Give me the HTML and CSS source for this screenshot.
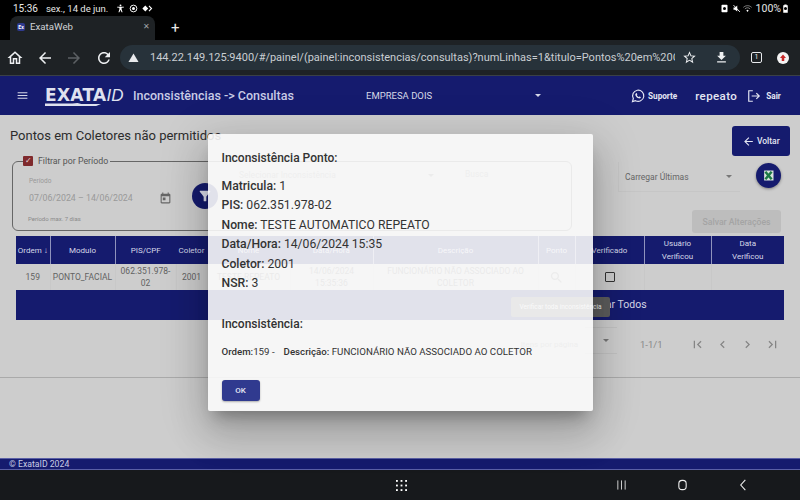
FILE: index.html
```html
<!DOCTYPE html>
<html lang="pt-BR">
<head>
  <meta charset="UTF-8">
  <meta name="viewport" content="width=device-width, initial-scale=1.0">
  <title>ExataWeb</title>
  <link rel="stylesheet" href="styles.css">
</head>
<body>
  <div class="status-bar">
    <div class="status-left">
      <span class="clock">15:36</span>
      <span>sex., 14 de jun.</span>
      <svg class="status-icon" viewBox="0 0 24 24"><path fill="#fff" d="M12 1a2.5 2.5 0 1 1 0 5 2.5 2.5 0 0 1 0-5zM3 7h18v2.4l-6 .8V14l2.5 8h-2.6L12 15.5 9.1 22H6.500L9 14v-3.800l-6-.8z"/></svg>
      <svg class="status-icon" viewBox="0 0 24 24"><circle cx="12" cy="12" r="9" fill="none" stroke="#fff" stroke-width="2.500"/><circle cx="12" cy="12" r="4" fill="#fff"/></svg>
      <svg class="status-icon wide" viewBox="0 0 30 24"><path fill="#fff" d="M9 4l8 8-8 8-8-8z"/><path fill="none" stroke="#fff" stroke-width="3" d="M19 5l7 7-7 7"/></svg>
    </div>
    <div class="status-right">
      <svg class="status-icon" viewBox="0 0 24 24"><path fill="#fff" d="M6 2h12a2 2 0 0 1 2 2v16a2 2 0 0 1-2 2H6a2 2 0 0 1-2-2V4a2 2 0 0 1 2-2zm6 6a4 4 0 1 0 0 8 4 4 0 0 0 0-8z"/></svg>
      <svg class="status-icon" viewBox="0 0 24 24"><path fill="#fff" d="M4 9h4l6-5v16l-6-5H4z"/><path stroke="#fff" stroke-width="2.500" d="M4 3l17 18"/></svg>
      <svg class="status-icon" viewBox="0 0 24 24"><path fill="none" stroke="#aaa" stroke-width="2" d="M1 9c6-6 16-6 22 0M5 13c4-4 10-4 14 0"/><path fill="#fff" d="M9 17c2-2 4-2 6 0l-3 4z"/></svg>
      <span class="battery-text">100%</span>
      <svg class="status-icon" viewBox="0 0 24 24"><path fill="#fff" d="M9 1h6v2h3v20H6V3h3zm3 7a4 4 0 1 0 0 8 4 4 0 0 0 0-8z"/></svg>
    </div>
  </div>

  <div class="tab-strip">
    <div class="tab">
      <span class="favicon">Ex</span>
      <span class="tab-title">ExataWeb</span>
      <span class="tab-close">✕</span>
    </div>
    <span class="tab-new">+</span>
  </div>

  <div class="toolbar">
    <svg class="tool-icon" viewBox="0 0 24 24"><path d="M12 5.690l5 4.500V18h-2v-6H9v6H7v-7.810l5-4.500M12 3L2 12h3v8h6v-6h2v6h6v-8h3L12 3z"/></svg>
    <svg class="tool-icon" viewBox="0 0 24 24"><path d="M20 11H7.830l5.590-5.590L12 4l-8 8 8 8 1.410-1.410L7.830 13H20v-2z"/></svg>
    <svg class="tool-icon off" viewBox="0 0 24 24"><path d="M12 4l-1.410 1.410L16.170 11H4v2h12.170l-5.580 5.590L12 20l8-8z"/></svg>
    <svg class="tool-icon" viewBox="0 0 24 24"><path d="M17.650 6.350C16.200 4.900 14.210 4 12 4c-4.420 0-7.990 3.580-7.990 8s3.570 8 7.990 8c3.730 0 6.840-2.550 7.730-6h-2.080c-.82 2.330-3.040 4-5.650 4-3.310 0-6-2.690-6-6s2.690-6 6-6c1.660 0 3.140.69 4.220 1.780L13 11h7V4l-2.350 2.350z"/></svg>
    <div class="omnibox">
      <svg class="warn-icon" viewBox="0 0 24 24"><path d="M12 3l11 19H1z"/></svg>
      <span class="url">144.22.149.125:9400/#/painel/(painel:inconsistencias/consultas)?numLinhas=1&amp;titulo=Pontos%20em%20Co</span>
      <svg class="omni-icon" viewBox="0 0 24 24"><path d="M22 9.240l-7.190-.62L12 2 9.190 8.630 2 9.240l5.460 4.730L5.820 21 12 17.270 18.180 21l-1.640-7.030L22 9.240zM12 15.400l-3.760 2.270 1-4.280-3.320-2.880 4.380-.38L12 6.100l1.710 4.040 4.380.38-3.320 2.880 1 4.280L12 15.400z"/></svg>
      <svg class="omni-icon" viewBox="0 0 24 24"><path d="M19 9h-4V3H9v6H5l7 7 7-7zM5 18v2h14v-2H5z"/></svg>
    </div>
    <span class="tab-count">1</span>
    <span class="update-dot"><svg viewBox="0 0 24 24"><path d="M12 5l6 7h-3.500v6h-5v-6H6z"/></svg></span>
  </div>

  <div class="app">
    <header class="app-header">
      <svg class="menu-icon" viewBox="0 0 24 24"><path d="M3 18h18v-2H3v2zm0-5h18v-2H3v2zm0-7v2h18V6H3z"/></svg>
      <div class="logo">
        <span class="logo-main">EXATA</span><span class="logo-id">ID</span>
        <svg class="logo-swoosh" viewBox="0 0 62 6" preserveAspectRatio="none"><path d="M0 1h28l5-1 4 2 20 0-5 4H0z"/></svg>
      </div>
      <span class="page-name">Inconsistências -&gt; Consultas</span>
      <div class="company"><span>EMPRESA DOIS</span><i class="caret light"></i></div>
      <svg class="whats-icon" viewBox="0 0 24 24"><path fill="none" stroke="#e4e6f3" stroke-width="2" d="M2.500 21.500l1.500-5.200a9.600 9.600 0 1 1 3.700 3.700z"/><path fill="#e4e6f3" d="M8.800 7.400c.5-.5 1.100-.4 1.300.1l.7 1.700c.1.300 0 .6-.5 1.200-.2.200-.2.400 0 .7.700 1.100 1.500 1.900 2.700 2.500.3.100.5.100.7-.1.600-.7.800-.8 1.100-.7l1.700.8c.4.200.5.700.2 1.300-.6 1.100-2 1.500-3.200 1.100-3.100-1-5-3-6-5.500-.4-1.200 0-2.300 1.300-3.100z"/></svg>
      <span class="support">Suporte</span>
      <span class="user">repeato</span>
      <svg class="exit-icon" viewBox="0 0 24 24"><path fill="none" stroke="#e4e6f3" stroke-width="2" d="M10 3H3v18h7M8 12h13M16 7l5 5-5 5"/></svg>
      <span class="support">Sair</span>
    </header>

    <main class="content">
      <div class="title-row">
        <h1>Pontos em Coletores não permitidos</h1>
        <button class="back-btn" type="button">
          <svg viewBox="0 0 24 24"><path d="M20 11H7.830l5.590-5.590L12 4l-8 8 8 8 1.410-1.410L7.830 13H20v-2z"/></svg>
          Voltar
        </button>
      </div>

      <div class="filter-row">
        <fieldset class="period-box">
          <legend><span class="checkbox-on">✓</span>Filtrar por Período</legend>
          <div class="period-field">
            <span class="field-label">Período</span>
            <div class="field-value">
              <span>07/06/2024 – 14/06/2024</span>
              <svg viewBox="0 0 24 24"><path d="M19 3h-1V1h-2v2H8V1H6v2H5c-1.110 0-2 .9-2 2v14c0 1.100.89 2 2 2h14c1.100 0 2-.9 2-2V5c0-1.100-.9-2-2-2zm0 16H5V8h14v11zM7 10h5v5H7z"/></svg>
            </div>
            <span class="field-hint">Período max. 7 dias</span>
          </div>
          <span class="filter-btn"><svg viewBox="0 0 24 24"><path d="M4.250 5.610C6.270 8.200 10 13 10 13v6c0 .55.45 1 1 1h2c.55 0 1-.45 1-1v-6s3.720-4.800 5.740-7.390c.51-.66.04-1.610-.79-1.610H5.040c-.83 0-1.300.95-.79 1.610z"/></svg></span>
          <div class="inconsist-select"><span>Selecionar Inconsistência</span><i class="caret"></i></div>
          <span class="search-field">Busca</span>
        </fieldset>

        <div class="right-col">
          <div class="load-row">
            <div class="load-select"><span>Carregar Últimas</span><i class="caret"></i></div>
            <span class="excel-btn">
              <svg viewBox="0 0 24 24"><path fill="#d9e4dc" d="M5 4h15v16H5z"/><path fill="none" stroke="#1d7a45" stroke-width="4" d="M7 6l10 12M17 6L7 18"/></svg>
            </span>
          </div>
          <button class="save-btn" type="button">Salvar Alterações</button>
        </div>
      </div>

      <table class="data-table">
        <colgroup>
          <col class="w-ordem"><col class="w-modulo"><col class="w-pis"><col class="w-coletor"><col class="w-nome"><col class="w-data"><col class="w-desc"><col class="w-ponto"><col class="w-verif"><col class="w-user"><col class="w-dataverif">
        </colgroup>
        <thead>
          <tr>
            <th>Ordem ↓</th>
            <th>Modulo</th>
            <th class="no-line">PIS/CPF</th>
            <th class="no-line">Coletor</th>
            <th class="no-line">Nome</th>
            <th>Data/Hora</th>
            <th>Descrição</th>
            <th>Ponto</th>
            <th>Verificado</th>
            <th>Usuário<br>Verificou</th>
            <th>Data<br>Verificou</th>
          </tr>
        </thead>
        <tbody>
          <tr>
            <td>159</td>
            <td>PONTO_FACIAL</td>
            <td>062.351.978-02</td>
            <td>2001</td>
            <td>TESTE REPEATO</td>
            <td>14/06/2024<br>15:35:36</td>
            <td>FUNCIONÁRIO NÃO ASSOCIADO AO COLETOR</td>
            <td><svg class="search-icon" viewBox="0 0 24 24"><path d="M15.500 14h-.79l-.28-.27C15.410 12.590 16 11.110 16 9.500 16 5.910 13.090 3 9.500 3S3 5.910 3 9.500 5.910 16 9.500 16c1.610 0 3.090-.59 4.230-1.570l.27.28v.79l5 4.990L20.490 19l-4.990-5zm-6 0C7.010 14 5 11.990 5 9.500S7.010 5 9.500 5 14 7.010 14 9.500 11.990 14 9.500 14z"/></svg></td>
            <td><span class="checkbox-off"></span></td>
            <td></td>
            <td></td>
          </tr>
        </tbody>
        <tfoot>
          <tr>
            <td colspan="8"></td>
            <td colspan="3" class="mark-all">Marcar Todos</td>
          </tr>
        </tfoot>
      </table>
      <span class="tooltip">Verificar toda inconsistência</span>

      <div class="paginator">
        <span class="page-label">Itens por página</span>
        <div class="page-size"><i class="caret"></i></div>
        <span class="page-range">1-1/1</span>
        <svg class="page-icon" viewBox="0 0 24 24"><path d="M18.410 16.590L13.820 12l4.590-4.590L17 6l-6 6 6 6zM6 6h2v12H6z"/></svg>
        <svg class="page-icon" viewBox="0 0 24 24"><path d="M15.410 7.410L14 6l-6 6 6 6 1.410-1.410L10.830 12z"/></svg>
        <svg class="page-icon" viewBox="0 0 24 24"><path d="M10 6L8.590 7.410 13.170 12l-4.580 4.590L10 18l6-6z"/></svg>
        <svg class="page-icon" viewBox="0 0 24 24"><path d="M5.590 7.410L10.180 12l-4.590 4.590L7 18l6-6-6-6zM16 6h2v12h-2z"/></svg>
      </div>
    </main>

    <footer class="app-footer">© ExataID 2024</footer>

    <div class="overlay">
      <div class="dialog">
        <h3>Inconsistência Ponto:</h3>
        <p><b>Matricula:</b> 1</p>
        <p><b>PIS:</b> 062.351.978-02</p>
        <p><b>Nome:</b> TESTE AUTOMATICO REPEATO</p>
        <p><b>Data/Hora:</b> 14/06/2024 15:35</p>
        <p><b>Coletor:</b> 2001</p>
        <p><b>NSR:</b> 3</p>
        <h3 class="second">Inconsistência:</h3>
        <div class="detail"><span><b>Ordem:</b>159 -</span><span><b>Descrição:</b> FUNCIONÁRIO NÃO ASSOCIADO AO COLETOR</span></div>
        <div class="dialog-actions"><button class="ok-btn" type="button">OK</button></div>
      </div>
    </div>
  </div>

  <div class="nav-bar">
    <svg class="nav-grid" viewBox="0 0 12 12"><g fill="#fff"><rect x="0" y="0" width="2" height="2"/><rect x="5" y="0" width="2" height="2"/><rect x="10" y="0" width="2" height="2"/><rect x="0" y="5" width="2" height="2"/><rect x="5" y="5" width="2" height="2"/><rect x="10" y="5" width="2" height="2"/><rect x="0" y="10" width="2" height="2"/><rect x="5" y="10" width="2" height="2"/><rect x="10" y="10" width="2" height="2"/></g></svg>
    <div class="nav-keys">
      <svg viewBox="0 0 12 12"><path stroke="#ddd" stroke-width="1" d="M2 1v10M6 1v10M10 1v10"/></svg>
      <svg viewBox="0 0 12 12"><rect x="2" y="1" width="8" height="10" rx="3.500" fill="none" stroke="#eee" stroke-width="1.200"/></svg>
      <svg viewBox="0 0 12 12"><path fill="none" stroke="#eee" stroke-width="1.200" d="M8 0.500L3 6l5 5.500"/></svg>
    </div>
  </div>
</body>
</html>
```

FILE: styles.css
```css
* {
  box-sizing: border-box;
}

html,
body {
  margin: 0;
  width: 800px;
  height: 500px;
  overflow: hidden;
}

body {
  display: flex;
  flex-direction: column;
  font-family: Roboto, "Liberation Sans", sans-serif;
  background-color: #000;
}

svg {
  display: block;
  flex: none;
}

/* tablet status bar + chrome */
.status-bar {
  height: 16px;
  padding: 1px 10px 0 13px;
  display: flex;
  justify-content: space-between;
  align-items: center;
  color: #e6e6e6;
  font-size: 9.5px;
  background-color: #000;
}

.status-left,
.status-right {
  display: flex;
  align-items: center;
}

.clock {
  margin-right: 8px;
  font-size: 10px;
}

.status-left .status-icon:first-of-type {
  margin-left: 8px;
}

.status-icon {
  width: 9px;
  height: 9px;
  margin-right: 4px;
}

.status-icon.wide {
  width: 11px;
}

.status-right .status-icon {
  margin-right: 2.500px;
}

.status-right .status-icon:last-child {
  margin: 0;
}

.battery-text {
  margin-left: 1px;
  font-size: 10.5px;
}

.tab-strip {
  height: 24px;
  padding-left: 10px;
  display: flex;
  align-items: flex-end;
  background-color: #000;
}

.tab {
  width: 145px;
  height: 24px;
  padding: 0 5px 3px 7px;
  display: flex;
  align-items: center;
  color: #d0d3d6;
  font-size: 9.700px;
  background-color: #1e2225;
  border-radius: 8px 8px 0 0;
}

.favicon {
  width: 8px;
  height: 8px;
  margin-right: 5px;
  color: #fff;
  font-size: 5px;
  font-weight: 700;
  line-height: 8px;
  text-align: center;
  background-color: #2f3a8f;
  border-radius: 2px;
}

.tab-title {
  flex: 1;
}

.tab-close {
  color: #a0a4a8;
  font-size: 8px;
}

.tab-new {
  margin: 0 0 2px 16px;
  color: #e8e8e8;
  font-size: 15px;
  line-height: 20px;
}

.toolbar {
  height: 36px;
  padding-left: 5px;
  display: flex;
  align-items: center;
  background-color: #1e2225;
  border-bottom: 1px solid #3a4046;
}

.tool-icon {
  width: 18px;
  height: 18px;
  margin: 0 10.500px 0 1px;
  fill: #eef0f2;
}

.tool-icon.off {
  fill: #5c6064;
}

.omnibox {
  width: 620px;
  height: 25px;
  margin-left: -3px;
  padding: 0 11px 0 8px;
  display: flex;
  align-items: center;
  background-color: #27323a;
  border-radius: 13px;
}

.warn-icon {
  width: 11px;
  height: 11px;
  margin-right: 11px;
  fill: #e8eaed;
}

.url {
  flex: none;
  width: 525px;
  overflow: hidden;
  color: #c9ced2;
  font-size: 11px;
  white-space: nowrap;
}

.omni-icon {
  width: 15px;
  height: 15px;
  margin-left: 7px;
  fill: #eef0f2;
}

.omni-icon:last-child {
  margin-left: 17px;
}

.tab-count {
  width: 11px;
  height: 11px;
  margin-left: 11px;
  color: #e8eaed;
  font-size: 7px;
  line-height: 9px;
  text-align: center;
  border: 1px solid #e8eaed;
  border-radius: 2px;
}

.update-dot {
  width: 12px;
  height: 12px;
  margin-left: 15px;
  background-color: #f4f4f4;
  border-radius: 50%;
}

.update-dot svg {
  width: 12px;
  height: 12px;
  fill: #c62828;
}

/* app */
.app {
  position: relative;
  flex: 1;
  display: flex;
  flex-direction: column;
  min-height: 0;
}

.app-header {
  height: 39px;
  padding-left: 16px;
  display: flex;
  align-items: center;
  color: #e4e6f3;
  background-color: #151b6e;
}

.menu-icon {
  width: 13px;
  height: 13px;
  fill: #d6d8e8;
}

.logo {
  position: relative;
  width: 79px;
  margin: 0 9px 0 16px;
  white-space: nowrap;
  line-height: 16px;
}

.logo-main {
  color: #dfe1ef;
  font-family: "DejaVu Sans", sans-serif;
  font-size: 17px;
  font-weight: 700;
  letter-spacing: 0.3px;
}

.logo-id {
  color: #dfe1ef;
  font-family: "Liberation Sans", sans-serif;
  font-size: 17px;
  font-style: italic;
}

.logo-swoosh {
  position: absolute;
  left: 0;
  bottom: -2px;
  width: 61px;
  height: 3px;
  fill: #dfe1ef;
}

.page-name {
  width: 233px;
  color: #c8cbe6;
  font-size: 12.500px;
  font-weight: 500;
}

.company {
  width: 175px;
  display: flex;
  align-items: center;
  justify-content: space-between;
  color: #d6d8e8;
  font-size: 9.500px;
}

.caret {
  display: block;
  width: 0;
  height: 0;
  border-left: 3px solid transparent;
  border-right: 3px solid transparent;
  border-top: 3px solid #777;
}

.caret.light {
  border-top-color: #d6d8e8;
}

.whats-icon {
  width: 14px;
  height: 14px;
  margin-left: 90px;
}

.support {
  margin-left: 3px;
  font-size: 8.200px;
  font-weight: 700;
}

.user {
  margin: 0 10px 0 18px;
  font-size: 11.500px;
  font-weight: 500;
  letter-spacing: 0.4px;
}

.exit-icon {
  width: 14px;
  height: 14px;
  margin-right: 2px;
}

.content {
  flex: 1;
  min-height: 0;
  position: relative;
  padding: 0 10px;
  background-color: #cdcdcd;
}

.title-row {
  height: 41px;
  padding-top: 11px;
  display: flex;
  justify-content: space-between;
  align-items: flex-start;
}

h1 {
  margin: 2px 0 0;
  color: #2c2c2c;
  font-size: 13px;
  font-weight: 400;
}

.back-btn {
  width: 58px;
  height: 30px;
  padding: 0 0 0 10px;
  display: flex;
  align-items: center;
  gap: 2px;
  color: #e4e6f3;
  font-family: inherit;
  font-size: 8.500px;
  font-weight: 500;
  background-color: #151b6e;
  border: none;
  border-radius: 3px;
}

.back-btn svg {
  width: 13px;
  height: 13px;
  fill: #e4e6f3;
}

.filter-row {
  height: 80px;
  display: flex;
}

.period-box {
  width: 560px;
  height: 75px;
  margin: 0 33px 0 2px;
  padding: 0 0 0 15px;
  position: relative;
  display: flex;
  border: 1px solid #666;
  border-radius: 6px;
}

.period-box legend {
  margin-left: -5px;
  padding: 0 2px 0 0;
  display: flex;
  align-items: center;
  color: #555;
  font-size: 8.800px;
}

.checkbox-on {
  width: 10px;
  height: 10px;
  margin-right: 5px;
  color: #e8d6d6;
  font-size: 8px;
  line-height: 10px;
  text-align: center;
  background-color: #7f2a2d;
  border-radius: 1px;
}

.period-field {
  width: 154px;
  margin-top: 11px;
  color: #999;
}

.field-label {
  display: block;
  margin-left: 1px;
  font-size: 6.500px;
}

.field-value {
  height: 22px;
  margin-top: 2px;
  padding: 0 10px 0 1px;
  display: flex;
  align-items: center;
  justify-content: space-between;
  font-size: 8.800px;
}

.field-value svg {
  width: 13px;
  height: 13px;
  fill: #666;
}

.field-hint {
  display: block;
  margin-top: 6px;
  color: #8a8a8a;
  font-size: 6px;
}

.filter-btn {
  width: 26px;
  height: 26px;
  margin: 17px 0 0 10px;
  padding: 5px;
  background-color: #151b6e;
  border-radius: 50%;
}

.filter-btn svg {
  width: 16px;
  height: 16px;
  fill: #dfe1ef;
}

.inconsist-select {
  width: 201px;
  height: 16px;
  margin: 1px 0 0 21px;
  padding-right: 6px;
  display: flex;
  align-items: center;
  justify-content: space-between;
  color: #888;
  font-size: 8.500px;
}

.search-field {
  margin: 3px 0 0 25px;
  color: #888;
  font-size: 8.500px;
}

.right-col {
  width: 163px;
  margin-left: 13px;
  padding-top: 6px;
  display: flex;
  flex-direction: column;
  align-items: flex-end;
}

.load-row {
  width: 100%;
  display: flex;
  align-items: center;
}

.load-select {
  width: 122px;
  height: 30px;
  padding: 0 8px 0 6px;
  display: flex;
  align-items: center;
  justify-content: space-between;
  color: #666;
  font-size: 8.500px;
  border-left: 1px solid #c6c6c6;
  border-bottom: 1px solid #c6c6c6;
}

.excel-btn {
  width: 25px;
  height: 25px;
  margin: -4px 0 0 16px;
  padding: 5px;
  background-color: #151b6e;
  border-radius: 50%;
  box-shadow: 0 1px 3px rgba(0,0,0,0.4);
}

.excel-btn svg {
  width: 15px;
  height: 15px;
}

.save-btn {
  width: 89px;
  height: 23px;
  margin: 18px 0 0;
  padding: 0;
  color: #a4a4a4;
  font-family: inherit;
  font-size: 8.700px;
  font-weight: 500;
  background-color: #bdbdbd;
  border: none;
  border-radius: 3px;
}

.data-table {
  width: 768px;
  margin-left: 6px;
  table-layout: fixed;
  border-collapse: collapse;
  color: #626262;
  font-size: 8.500px;
}

.w-ordem { width: 34px; }
.w-modulo { width: 65px; }
.w-pis { width: 61px; }
.w-coletor { width: 31px; }
.w-nome { width: 83px; }
.w-data { width: 83px; }
.w-desc { width: 165px; }
.w-ponto { width: 37px; }
.w-verif { width: 69px; }
.w-user { width: 67px; }
.w-dataverif { width: 73px; }

.data-table th {
  height: 28px;
  padding: 0 1px;
  color: #d6d8e8;
  font-size: 8px;
  font-weight: 400;
  line-height: 13px;
  background-color: #151b6e;
  border-right: 1px solid #8f93bd;
}

.data-table th:last-child,
.data-table th.no-line {
  border-right: none;
}

.data-table td {
  height: 26px;
  padding: 0 2px;
  line-height: 12px;
  text-align: center;
  border-right: 1px solid #c8c8c8;
}

.data-table td:last-child {
  border-right: none;
}

.search-icon {
  width: 15px;
  height: 15px;
  margin: 0 auto;
  fill: #777;
}

.checkbox-off {
  display: block;
  width: 10px;
  height: 10px;
  margin: 0 auto;
  border: 1px solid #333;
  border-radius: 1px;
}

.data-table tfoot td {
  height: 30px;
  border: none;
  background-color: #151b6e;
}

.data-table tfoot td.mark-all {
  padding-left: 7px;
  color: #d6d8e8;
  font-size: 10.500px;
  text-align: left;
}

.tooltip {
  position: absolute;
  left: 511px;
  top: 182px;
  width: 99px;
  height: 20px;
  color: #eee;
  font-size: 6.500px;
  line-height: 20px;
  text-align: center;
  white-space: nowrap;
  background-color: #5c5c5c;
  border-radius: 2px;
}

.paginator {
  width: 800px;
  height: 58px;
  margin-left: -10px;
  padding: 0 20px 8px 0;
  display: flex;
  align-items: center;
  justify-content: flex-end;
  color: #888;
  border-bottom: 1px solid #aaa;
}

.page-label {
  margin-right: 7px;
  font-size: 8px;
}

.page-size {
  width: 32px;
  height: 27px;
  margin-top: -8px;
  padding-right: 8px;
  display: flex;
  align-items: center;
  justify-content: flex-end;
  border-top: 1px solid #c2c2c2;
  border-bottom: 1px solid #c2c2c2;
}

.page-range {
  width: 63px;
  padding-left: 23px;
  font-size: 9.500px;
}

.page-icon {
  width: 15px;
  height: 15px;
  margin-left: 10px;
  fill: #858585;
}

.app-footer {
  height: 12px;
  padding-left: 9px;
  color: #c9cce4;
  font-size: 8.700px;
  line-height: 10px;
  background-color: #151b6e;
  border-top: 1px solid #5a5fa5;
  border-bottom: 1px solid #5a5fa5;
}

/* dialog */
.overlay {
  position: absolute;
  inset: 0;
  display: flex;
  align-items: center;
  justify-content: center;
}

.dialog {
  width: 385px;
  height: 277px;
  margin-bottom: 1px;
  padding: 17px 14px 0;
  color: #333;
  font-size: 12.200px;
  background-color: rgba(250,250,250,0.89);
  border-radius: 2px;
  box-shadow: 0 11px 15px -7px rgba(0,0,0,0.3), 0 24px 38px 3px rgba(0,0,0,0.14), 0 9px 46px 8px rgba(0,0,0,0.12);
}

.dialog h3 {
  margin: 0 0 12px;
  font-size: 12px;
  font-weight: 500;
  line-height: 14px;
}

.dialog h3.second {
  margin: 24px 0 15px;
}

.dialog p {
  margin: 0;
  line-height: 19.400px;
}

.dialog b {
  font-weight: 500;
}

.detail {
  display: flex;
  gap: 9px;
  font-size: 9.700px;
  line-height: 12px;
}

.dialog-actions {
  margin-top: 22px;
}

.ok-btn {
  width: 38px;
  height: 21px;
  padding: 0;
  color: #e4e6f3;
  font-family: inherit;
  font-size: 8px;
  font-weight: 500;
  background-color: #303a8f;
  border: none;
  border-radius: 3px;
  box-shadow: 0 1px 2px rgba(0,0,0,0.3);
}

/* android nav */
.nav-bar {
  height: 30px;
  padding-left: 396px;
  display: flex;
  align-items: center;
  background-color: #17191c;
}

.nav-grid {
  width: 11px;
  height: 11px;
}

.nav-keys {
  margin-left: 209px;
  display: flex;
  gap: 50px;
}

.nav-keys svg {
  width: 11px;
  height: 12px;
}
```
